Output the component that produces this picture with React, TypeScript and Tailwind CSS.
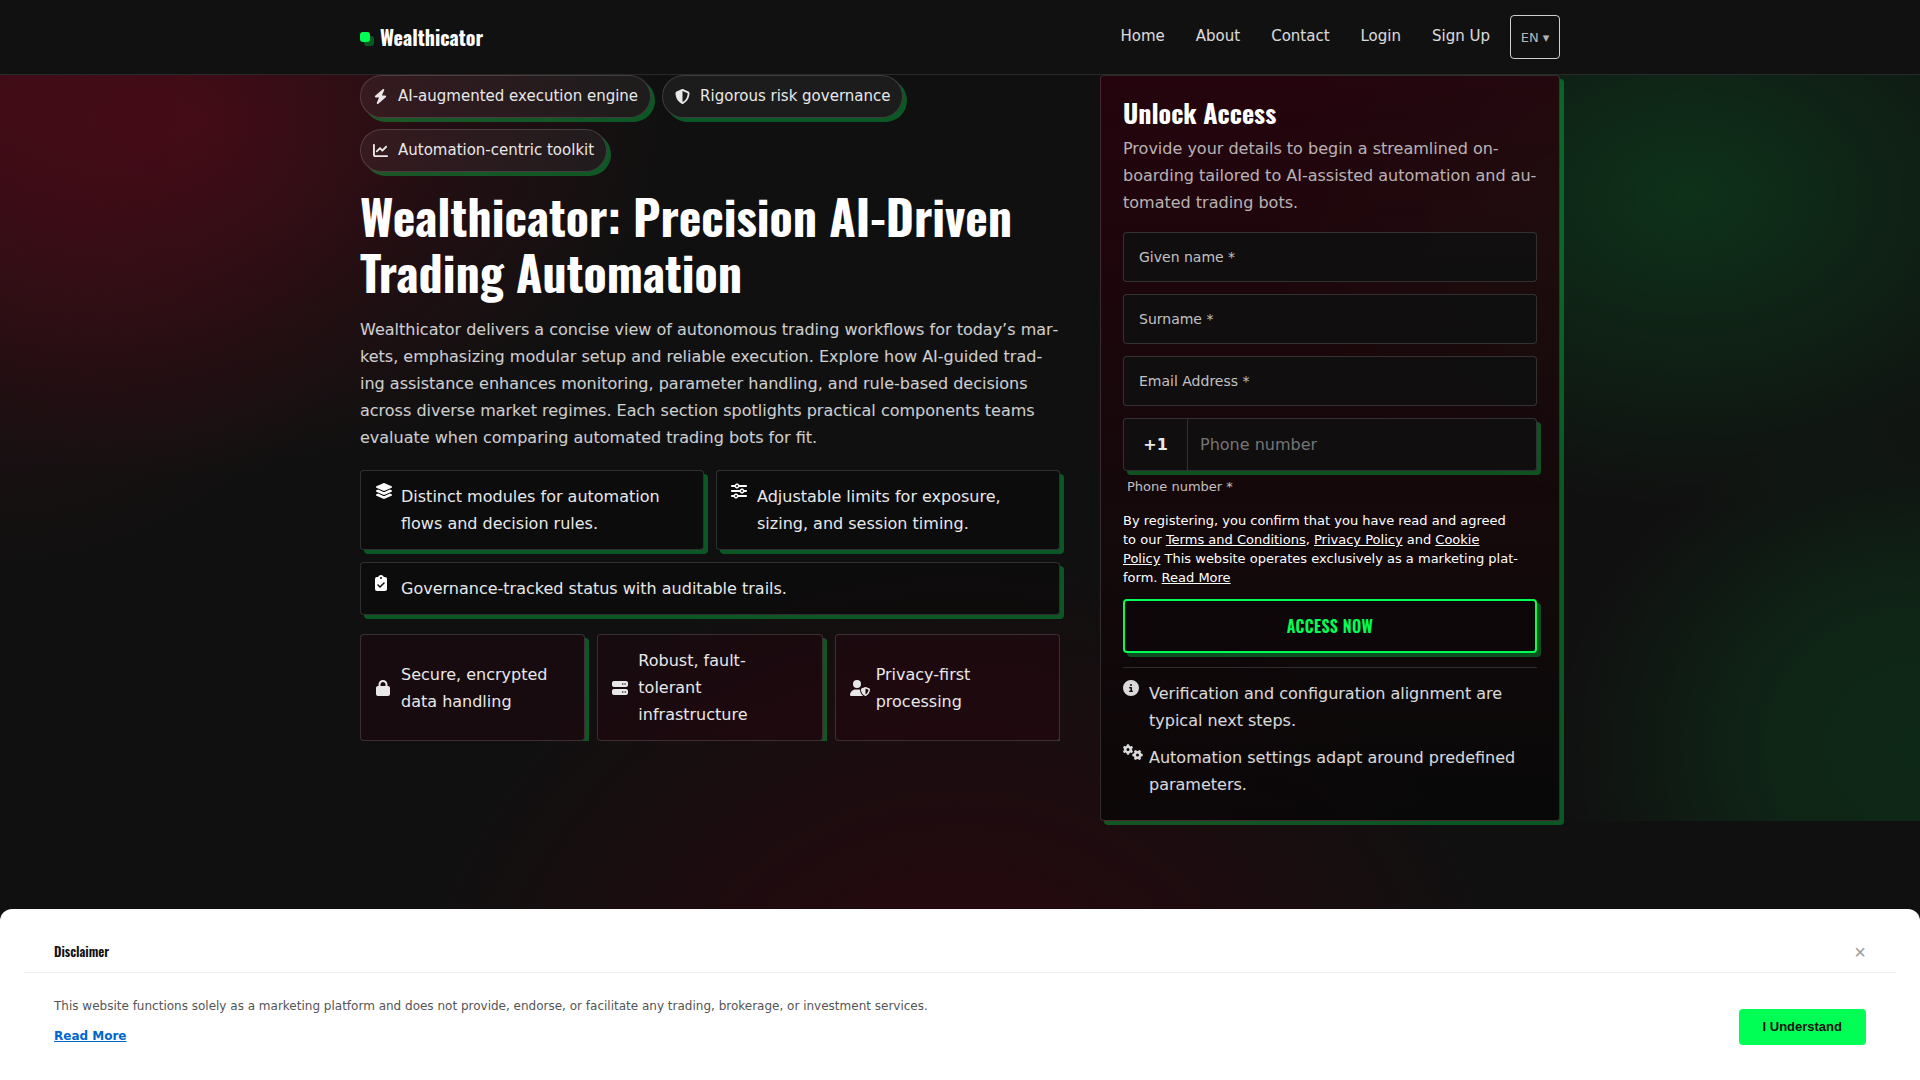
import type { ReactNode } from "react";
import type { IconType } from "react-icons";
import {
  FaBolt,
  FaChartLine,
  FaCircleInfo,
  FaClipboardCheck,
  FaGears,
  FaLayerGroup,
  FaLock,
  FaServer,
  FaShieldHalved,
  FaSliders,
  FaUserShield,
} from "react-icons/fa6";

const navLinks = ["Home", "About", "Contact", "Login", "Sign Up"];

const badges = [
  { icon: FaBolt, text: "AI-augmented execution engine" },
  { icon: FaShieldHalved, text: "Rigorous risk governance" },
  { icon: FaChartLine, text: "Automation-centric toolkit" },
];

const features = [
  {
    icon: FaLayerGroup,
    size: "h-4 w-[18px]",
    text: "Distinct modules for automation flows and decision rules.",
    span: "",
  },
  {
    icon: FaSliders,
    size: "h-4 w-4",
    text: "Adjustable limits for exposure, sizing, and session timing.",
    span: "",
  },
  {
    icon: FaClipboardCheck,
    size: "h-4 w-3",
    text: "Governance-tracked status with auditable trails.",
    span: "col-span-2",
  },
];

const trust = [
  { icon: FaLock, size: "h-4 w-4", text: "Secure, encrypted data handling" },
  { icon: FaServer, size: "h-4 w-4", text: "Robust, fault-tolerant infrastructure" },
  { icon: FaUserShield, size: "h-4 w-5", text: "Privacy-first processing" },
];

const notes = [
  {
    icon: FaCircleInfo,
    size: "h-4 w-4",
    text: "Verification and configuration alignment are typical next steps.",
  },
  {
    icon: FaGears,
    size: "h-4 w-5",
    text: "Automation settings adapt around predefined parameters.",
  },
];

const fields = [
  { id: "first-name", label: "Given name *", type: "text" },
  { id: "last-name", label: "Surname *", type: "text" },
  { id: "email", label: "Email Address *", type: "email" },
];

// Icons share a 16px column so the text lines up; wider glyphs spill into the gap.
function IconRow({
  icon: Icon,
  size,
  children,
}: {
  icon: IconType;
  size: string;
  children: ReactNode;
}) {
  return (
    <>
      <span className="w-4 shrink-0">
        <Icon className={size} />
      </span>
      <span>{children}</span>
    </>
  );
}

function Header() {
  return (
    <header className="sticky top-0 z-40 border-b border-white/10 bg-[#111111]">
      <div className="mx-auto flex h-[74px] max-w-[1200px] items-center justify-between">
        <a
          href="#"
          className="flex items-center gap-[10px] font-['Oswald',sans-serif] text-xl font-bold text-white"
        >
          <span className="h-[10px] w-[10px] rounded-[3px] bg-[#00ff55] shadow-[4px_4px_0_rgba(0,255,85,0.3)]" />
          Wealthicator
        </a>
        <div className="flex items-center gap-5">
          <nav className="flex gap-[31px] pb-0.5 text-[15px] text-white/85">
            {navLinks.map((link) => (
              <a key={link} href="#">
                {link}
              </a>
            ))}
          </nav>
          <button
            type="button"
            className="h-11 w-[50px] rounded border border-white/80 text-[13px] text-white/70"
          >
            EN ▾
          </button>
        </div>
      </div>
    </header>
  );
}

function Intro() {
  return (
    <div className="min-w-0">
      <ul className="flex flex-wrap gap-[11px]">
        {badges.map(({ icon: Icon, text }) => (
          <li
            key={text}
            className="flex items-center gap-[10px] rounded-full border border-white/15 bg-white/5 px-3 py-2 text-[15px] leading-[25px] text-[#e8e8e8] shadow-[4px_4px_0_rgba(0,255,85,0.3)]"
          >
            <Icon className="h-[15px] w-[15px]" />
            {text}
          </li>
        ))}
      </ul>

      <h1 className="mt-4 font-['Oswald',sans-serif] text-5xl leading-[56px] font-bold text-white">
        Wealthicator: Precision AI-Driven Trading Automation
      </h1>

      <p className="mt-4 text-white/80">
        Wealthicator delivers a concise view of autonomous trading workflows for today’s
        mar&shy;kets, emphasizing modular setup and reliable execution. Explore how AI-guided
        trad&shy;ing assistance enhances monitoring, parameter handling, and rule-based decisions
        across diverse market regimes. Each section spotlights practical components teams
        evaluate when comparing automated trading bots for fit.
      </p>

      <ul className="mt-[19px] grid grid-cols-2 gap-3">
        {features.map(({ icon, size, text, span }) => (
          <li
            key={text}
            className={`flex gap-[10px] rounded border border-white/15 bg-black/25 px-[14px] py-3 text-[#e8e8e8] shadow-[4px_4px_0_rgba(0,255,85,0.3)] ${span}`}
          >
            <IconRow icon={icon} size={`${size} text-white`}>
              {text}
            </IconRow>
          </li>
        ))}
      </ul>

      <ul className="mt-[19px] grid grid-cols-3 gap-3 overflow-hidden">
        {trust.map(({ icon, size, text }) => (
          <li
            key={text}
            className="flex items-center gap-[10px] rounded border border-white/15 bg-[#2a000c]/30 px-[14px] py-3 text-[#e8e8e8] shadow-[4px_4px_0_rgba(0,255,85,0.3)]"
          >
            <IconRow icon={icon} size={size}>
              {text}
            </IconRow>
          </li>
        ))}
      </ul>
    </div>
  );
}

function SignUpPanel() {
  return (
    <aside className="rounded border border-white/15 bg-linear-to-b from-[#2c000d]/75 to-[#050505]/65 p-[22px] shadow-[4px_4px_0_rgba(0,255,85,0.3)]">
      <h2 className="font-['Oswald',sans-serif] text-[26px] leading-[30px] font-bold text-white">
        Unlock Access
      </h2>
      <p className="mt-[7px] text-white/70">
        Provide your details to begin a streamlined on&shy;boarding tailored to AI-assisted
        automation and au&shy;tomated trading bots.
      </p>

      <form className="mt-4 flex flex-col gap-3" onSubmit={(e) => e.preventDefault()}>
        {fields.map(({ id, label, type }) => (
          <div key={id} className="relative">
            <input
              id={id}
              type={type}
              className="block h-[50px] w-full rounded border border-white/15 bg-[#101010]/90 px-4 text-white"
            />
            <label
              htmlFor={id}
              className="pointer-events-none absolute inset-y-0 left-4 flex items-center text-sm text-white/75"
            >
              {label}
            </label>
          </div>
        ))}

        <div>
          <div className="flex h-[53px] rounded border border-white/15 bg-[#101010]/90 shadow-[4px_4px_0_rgba(0,255,85,0.3)]">
            <span className="flex w-16 items-center justify-center border-r border-white/15 font-bold text-[#e8e8e8]">
              +1
            </span>
            <input
              id="phone"
              type="tel"
              placeholder="Phone number"
              className="min-w-0 flex-1 px-3 text-white placeholder:text-[#757575]"
            />
          </div>
          <label htmlFor="phone" className="mt-1 block px-1 text-[13px] leading-6 text-white/75">
            Phone number *
          </label>
        </div>

        <p className="text-[13px] leading-[19px] text-white">
          By registering, you confirm that you have read and agreed
          <br />
          to our{" "}
          <a href="#" className="underline">
            Terms and Conditions
          </a>
          ,{" "}
          <a href="#" className="underline">
            Privacy Policy
          </a>{" "}
          and{" "}
          <a href="#" className="underline">
            Cookie
            <br />
            Policy
          </a>{" "}
          This website operates exclusively as a marketing plat-
          <br />
          form.{" "}
          <a href="#" className="underline">
            Read More
          </a>
        </p>

        <button
          type="submit"
          className="h-[54px] rounded border-2 border-[#00ff55] bg-[#0d070a] font-['Oswald',sans-serif] font-semibold tracking-wide text-[#00ff55] uppercase shadow-[4px_4px_0_rgba(0,255,85,0.3)]"
        >
          Access now
        </button>
      </form>

      <ul className="mt-[14px] flex flex-col gap-[10px] border-t border-white/15 pt-3 text-white/85">
        {notes.map(({ icon, size, text }) => (
          <li key={text} className="flex gap-[10px]">
            <IconRow icon={icon} size={size}>
              {text}
            </IconRow>
          </li>
        ))}
      </ul>
    </aside>
  );
}

function Disclaimer() {
  return (
    <section
      aria-labelledby="disclaimer-title"
      className="fixed inset-x-0 bottom-0 z-50 rounded-t-xl bg-white px-6 pb-[35px]"
    >
      <div className="flex h-16 items-center justify-between border-b border-[#eeeeee] px-[30px] pt-[22px]">
        <h2
          id="disclaimer-title"
          className="font-['Oswald',sans-serif] text-[13px] font-semibold text-[#111111]"
        >
          Disclaimer
        </h2>
        <button
          type="button"
          aria-label="Close"
          className="font-['Liberation_Sans',sans-serif] text-xl leading-6 text-[#999999]"
        >
          ×
        </button>
      </div>
      <div className="flex items-end justify-between px-[30px] pt-6 text-xs leading-[18px]">
        <div>
          <p className="text-[#555555]">
            This website functions solely as a marketing platform and does not provide, endorse,
            or facilitate any trading, brokerage, or investment services.
          </p>
          <a href="#" className="mt-3 block font-bold text-[#0066cc] underline">
            Read More
          </a>
        </div>
        <button
          type="button"
          className="h-9 rounded bg-[#00ff55] px-6 font-['Liberation_Sans',sans-serif] text-[13px] font-bold text-[#111111]"
        >
          I Understand
        </button>
      </div>
    </section>
  );
}

export default function App() {
  return (
    <div
      lang="en"
      className="min-h-screen bg-[#101010] bg-[radial-gradient(30%_50%_at_50%_100%,rgba(64,0,12,0.6),rgba(64,0,12,0))] font-['DejaVu_Sans',sans-serif] leading-[27px]"
    >
      <Header />
      <main className="bg-[radial-gradient(25%_48%_at_10%_6%,rgba(198,0,40,0.22),rgba(198,0,40,0)),radial-gradient(22%_64%_at_0%_4%,rgba(198,0,40,0.16),rgba(198,0,40,0)),radial-gradient(23%_42%_at_88%_16%,rgba(0,255,85,0.14),rgba(0,255,85,0)),radial-gradient(19%_44%_at_100%_90%,rgba(0,255,85,0.1),rgba(0,255,85,0.09)_40%,rgba(0,255,85,0))]">
        <div className="mx-auto grid max-w-[1200px] grid-cols-[minmax(0,1fr)_460px] gap-10">
          <Intro />
          <SignUpPanel />
        </div>
      </main>
      <Disclaimer />
    </div>
  );
}
